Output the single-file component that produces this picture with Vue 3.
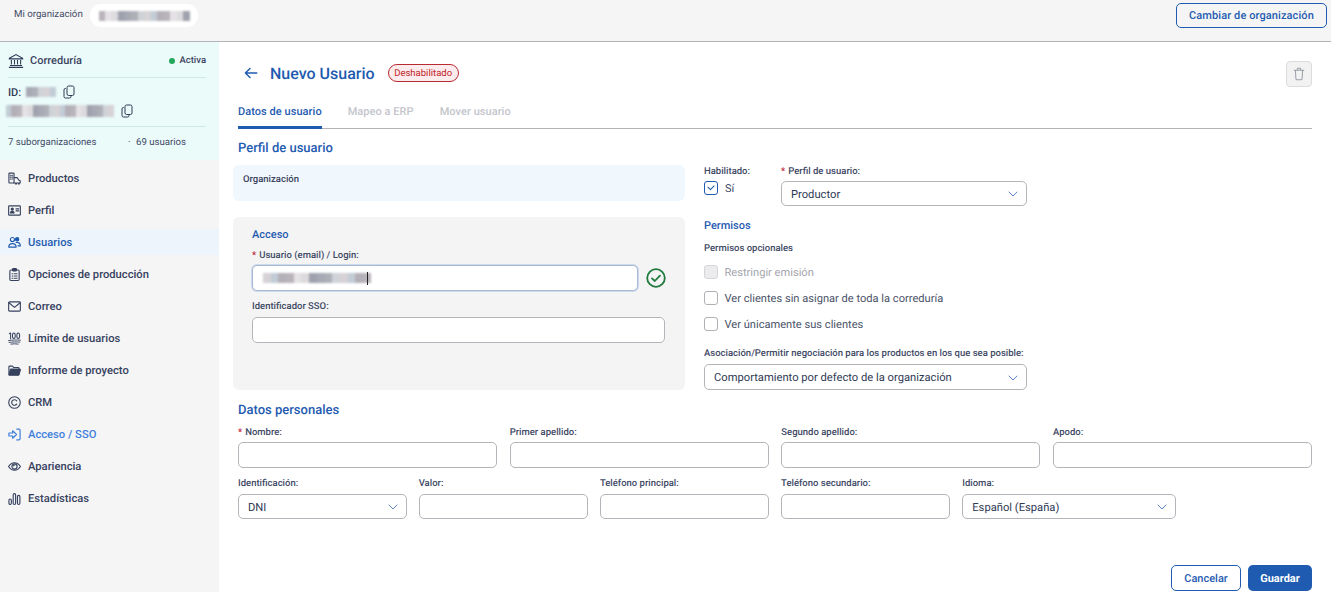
<script setup>
const pal = ['#b9b4bb','#d6d2d6','#a7a9b4','#e4e2e4','#c2ccd6','#aeb0b8','#dcdadc','#b4b0b8','#cfd3d8','#9fa2ae']
const blur = (n, w, seed = 0) =>
  Array.from({ length: n }, (_, i) => ({ width: w + 'px', background: pal[(i * 3 + seed) % pal.length] }))
const orgBlur = blur(14, 6.5)
const idBlur = blur(5, 6, 2)
const mailBlur = blur(20, 5.4, 4)
const loginBlur = blur(14, 7.7, 1)

const nav = [
  { label: 'Productos', icon: 'products' },
  { label: 'Perfil', icon: 'card' },
  { label: 'Usuarios', icon: 'users', active: true },
  { label: 'Opciones de producción', icon: 'clip' },
  { label: 'Correo', icon: 'mail' },
  { label: 'Límite de usuarios', icon: 'hundred' },
  { label: 'Informe de proyecto', icon: 'folder' },
  { label: 'CRM', icon: 'crm' },
  { label: 'Acceso / SSO', icon: 'login', link: true },
  { label: 'Apariencia', icon: 'eye' },
  { label: 'Estadísticas', icon: 'bars' }
]
const row1 = [
  { label: 'Nombre:', req: true },
  { label: 'Primer apellido:' },
  { label: 'Segundo apellido:' },
  { label: 'Apodo:' }
]
const perms = [
  { label: 'Restringir emisión', disabled: true },
  { label: 'Ver clientes sin asignar de toda la correduría' },
  { label: 'Ver únicamente sus clientes' }
]
</script>

<template>
  <div class="page">
    <header class="topbar">
      <span class="org-label">Mi organización</span>
      <span class="org-pill"><span class="blur"><i v-for="(b, i) in orgBlur" :key="i" :style="b"></i></span></span>
      <button class="btn-outline change">Cambiar de organización</button>
    </header>

    <div class="body">
      <aside class="side">
        <section class="card">
          <div class="card-head">
            <svg class="bank" viewBox="0 0 18 18" fill="none" stroke="#2f3a55" stroke-width="1.2">
              <path d="M1.5 6 9 1.8 16.500 6v.6h-15z" />
              <path d="M3.800 8v5M7.300 8v5M10.700 8v5M14.200 8v5M2.200 14h13.600M1 16.200h16" />
            </svg>
            <span class="card-title">Correduría</span>
            <span class="status"><i class="dot"></i>Activa</span>
          </div>
          <div class="id-row">
            <span class="id">ID:</span>
            <span class="blur"><i v-for="(b, i) in idBlur" :key="i" :style="b"></i></span>
            <svg class="copy" viewBox="0 0 12 14" fill="none" stroke="#2f3a55" stroke-width="1">
              <rect x="4" y="1" width="7" height="9.5" rx="1.6" />
              <path d="M3 3.5h-.6A1.4 1.4 0 0 0 1 5v6.6A1.4 1.4 0 0 0 2.4 13h4.2A1.4 1.4 0 0 0 8 11.6V11" />
            </svg>
          </div>
          <div class="mail-row">
            <span class="blur tall"><i v-for="(b, i) in mailBlur" :key="i" :style="b"></i></span>
            <svg class="copy" viewBox="0 0 12 14" fill="none" stroke="#2f3a55" stroke-width="1">
              <rect x="4" y="1" width="7" height="9.5" rx="1.6" />
              <path d="M3 3.5h-.6A1.4 1.4 0 0 0 1 5v6.6A1.4 1.4 0 0 0 2.4 13h4.2A1.4 1.4 0 0 0 8 11.6V11" />
            </svg>
          </div>
          <div class="counts">
            <span class="subs">7 suborganizaciones</span>
            <span class="sep">·</span>
            <span>69 usuarios</span>
          </div>
        </section>

        <nav class="nav">
          <a v-for="item in nav" :key="item.label" class="nav-item" :class="{ active: item.active, link: item.link }">
            <svg class="nav-icon" viewBox="0 0 14 14" fill="none" stroke="currentColor" stroke-width="1.2" stroke-linecap="round" stroke-linejoin="round">
              <template v-if="item.icon === 'products'">
                <rect x="1" y="1.2" width="5.5" height="10.6" rx=".6" />
                <path d="M2.6 3.5h.6M4.4 3.5H5M2.6 5.5h.6M4.4 5.5H5M2.6 7.5h.6M4.4 7.5H5" />
                <path d="M6.5 6h3.4l1.6 2.6 1.6.8v2.4H6.5M8.2 12.8h.9M11.2 12.8h.9" />
              </template>
              <template v-else-if="item.icon === 'card'">
                <rect x=".7" y="2" width="12.6" height="10" rx=".8" />
                <circle cx="4.6" cy="5.6" r="1.1" fill="currentColor" />
                <path d="M2.6 9.6c.2-2.2 3.8-2.2 4 0z" fill="currentColor" />
                <path d="M8.6 5.2h3M8.6 7.4h3" />
              </template>
              <template v-else-if="item.icon === 'users'">
                <circle cx="4.8" cy="3.8" r="2.2" />
                <circle cx="9.8" cy="3.6" r="1.8" fill="currentColor" />
                <path d="M.8 12c.1-5 7.8-5 8 0zM8.8 7c2.6-.6 4.4.9 4.5 3.6h-2.6" />
              </template>
              <template v-else-if="item.icon === 'clip'">
                <rect x="2" y="2.2" width="10" height="11.2" rx="1.2" />
                <rect x="5" y=".6" width="4" height="2.6" rx=".5" fill="currentColor" />
                <path d="M4.4 6.2h1M7 6.2h2.8M4.4 8.6h1M7 8.6h2.8M4.4 11h1M7 11h2.8" />
              </template>
              <template v-else-if="item.icon === 'mail'">
                <rect x=".7" y="2" width="12.6" height="10" rx="1" />
                <path d="M1 3 7 8l6-5" />
              </template>
              <template v-else-if="item.icon === 'hundred'">
                <path d="M1.4 1.8 2.8 1v6.2" stroke-width="1.1" />
                <ellipse cx="6.3" cy="4.1" rx="1.5" ry="3" stroke-width="1.1" />
                <ellipse cx="11" cy="4.1" rx="1.5" ry="3" stroke-width="1.1" />
                <path d="M.6 9.2c4-.7 8.6-.7 12.8-.4M1.2 11.2c3.800-.6 8-.6 11.600-.3M3 13c2.600-.4 5.600-.4 8 0" stroke-width="1" />
              </template>
              <template v-else-if="item.icon === 'folder'">
                <path d="M1 11V3c0-.4.3-.7.7-.7h3L6 3.7h5c.5 0 .8.3.8.8v1" />
                <path d="M1 11.800 2.600 6c.1-.3.3-.5.7-.5h9.400c.4 0 .7.3.6.7l-1.400 5.300c-.1.3-.3.5-.7.5H1.600z" fill="currentColor" />
              </template>
              <template v-else-if="item.icon === 'crm'">
                <circle cx="7" cy="7" r="6.2" />
                <path d="M9.400 5.200A3 3 0 1 0 9.400 8.800" />
              </template>
              <template v-else-if="item.icon === 'login'">
                <path d="M9.400 1.200h2.400c.8 0 1.200.4 1.200 1.200v9.200c0 .8-.4 1.200-1.200 1.200H9.400" stroke-width="1.3" />
                <path d="M1 5.400h4V3l4.200 4-4.200 4V8.600H1z" stroke-width="1.3" />
              </template>
              <template v-else-if="item.icon === 'eye'">
                <path d="M.6 7c3.400-5.400 9.400-5.400 12.800 0-3.400 5.400-9.400 5.400-12.800 0z" />
                <circle cx="7" cy="7" r="2.800" />
                <path d="M5.800 6.400A1.400 1.400 0 0 1 7.400 5.400" />
              </template>
              <template v-else>
                <rect x="1" y="7.600" width="2.600" height="5.800" rx="1.300" />
                <rect x="5.600" y="1.800" width="2.600" height="11.600" rx="1.300" />
                <rect x="10.200" y="3.600" width="2.600" height="9.800" rx="1.300" />
              </template>
            </svg>
            <span>{{ item.label }}</span>
          </a>
        </nav>
      </aside>

      <main class="main">
        <div class="title-row">
          <svg class="back" viewBox="0 0 14 12" fill="none" stroke="#1f5bb0" stroke-width="1.4" stroke-linecap="round" stroke-linejoin="round">
            <path d="M1.4 6h11.4M6 1.4 1.4 6 6 10.6" />
          </svg>
          <h1>Nuevo Usuario</h1>
          <span class="badge">Deshabilitado</span>
          <button class="trash" aria-label="Eliminar">
            <svg viewBox="0 0 14 16" fill="none" stroke="#9a9ea8" stroke-width="1.2" stroke-linecap="round" stroke-linejoin="round">
              <path d="M1.4 3.6h11.2M5 3.4V2.2c0-.5.3-.8.8-.8h2.4c.5 0 .8.3.8.8v1.2M2.8 3.8l.6 9.8c0 .6.4 1 1 1h5.2c.6 0 1-.4 1-1l.6-9.8" />
            </svg>
          </button>
        </div>

        <div class="tabs">
          <span class="tab current">Datos de usuario</span>
          <span class="tab">Mapeo a ERP</span>
          <span class="tab">Mover usuario</span>
        </div>

        <h2 class="section">Perfil de usuario</h2>

        <div class="columns">
          <div class="left">
            <div class="org-box">Organización</div>
            <div class="access">
              <h3>Acceso</h3>
              <label class="lbl"><span class="req">*</span>Usuario (email) / Login:</label>
              <div class="login-row">
                <div class="field focused">
                  <span class="blur"><i v-for="(b, i) in loginBlur" :key="i" :style="b"></i></span>
                  <i class="caret"></i>
                </div>
                <svg class="ok" viewBox="0 0 20 20" fill="none" stroke="#1f7a3d" stroke-width="1.8" stroke-linecap="round" stroke-linejoin="round">
                  <circle cx="10" cy="10" r="8.8" />
                  <path d="M6 10.4 8.8 13 14 7.6" />
                </svg>
              </div>
              <label class="lbl sso">Identificador SSO:</label>
              <input class="field" type="text" />
            </div>
          </div>

          <div class="right">
            <div class="top-fields">
              <div class="enabled">
                <label class="lbl">Habilitado:</label>
                <div class="check-line">
                  <span class="box checked">
                    <svg viewBox="0 0 14 14" fill="none" stroke="#1f5bb0" stroke-width="1.2" stroke-linecap="round" stroke-linejoin="round"><path d="M3.4 6 6.4 9l4.2-4.4" /></svg>
                  </span>
                  <span class="si">Sí</span>
                </div>
              </div>
              <div class="profile">
                <label class="lbl"><span class="req">*</span>Perfil de usuario:</label>
                <div class="select">
                  <span>Productor</span>
                  <svg viewBox="0 0 10 6" fill="none" stroke="#4a78bd" stroke-width=".9" stroke-linecap="round" stroke-linejoin="round"><path d="M1 1l4 4 4-4" /></svg>
                </div>
              </div>
            </div>
            <h3 class="perm-title">Permisos</h3>
            <p class="lbl perm-sub">Permisos opcionales</p>
            <div v-for="p in perms" :key="p.label" class="perm" :class="{ disabled: p.disabled }">
              <span class="box"></span>
              <span>{{ p.label }}</span>
            </div>
            <label class="lbl assoc">Asociación/Permitir negociación para los productos en los que sea posible:</label>
            <div class="select">
              <span>Comportamiento por defecto de la organización</span>
              <svg viewBox="0 0 10 6" fill="none" stroke="#4a78bd" stroke-width=".9" stroke-linecap="round" stroke-linejoin="round"><path d="M1 1l4 4 4-4" /></svg>
            </div>
          </div>
        </div>

        <h2 class="section personal">Datos personales</h2>
        <div class="row-a">
          <div v-for="f in row1" :key="f.label">
            <label class="lbl"><span v-if="f.req" class="req">*</span>{{ f.label }}</label>
            <input class="field" type="text" />
          </div>
        </div>
        <div class="row-b">
          <div>
            <label class="lbl">Identificación:</label>
            <div class="select">
              <span>DNI</span>
              <svg viewBox="0 0 10 6" fill="none" stroke="#4a78bd" stroke-width=".9" stroke-linecap="round" stroke-linejoin="round"><path d="M1 1l4 4 4-4" /></svg>
            </div>
          </div>
          <div>
            <label class="lbl">Valor:</label>
            <input class="field" type="text" />
          </div>
          <div>
            <label class="lbl">Teléfono principal:</label>
            <input class="field" type="text" />
          </div>
          <div>
            <label class="lbl">Teléfono secundario:</label>
            <input class="field" type="text" />
          </div>
          <div>
            <label class="lbl">Idioma:</label>
            <div class="select">
              <span>Español (España)</span>
              <svg viewBox="0 0 10 6" fill="none" stroke="#4a78bd" stroke-width=".9" stroke-linecap="round" stroke-linejoin="round"><path d="M1 1l4 4 4-4" /></svg>
            </div>
          </div>
        </div>

        <div class="actions">
          <button class="btn-outline cancel">Cancelar</button>
          <button class="save">Guardar</button>
        </div>
      </main>
    </div>
  </div>
</template>

<style>
html, body { margin: 0; background: #fff; overflow: hidden; }
</style>

<style scoped>
* { box-sizing: border-box; }
.page {
  width: 1331px; height: 592px; overflow: hidden;
  font-family: Roboto, "Noto Sans", sans-serif; color: #2f3a55;
  display: flex; flex-direction: column;
  text-rendering: geometricPrecision;
}
.topbar {
  height: 42px; flex: none; background: #f5f5f5; border-bottom: 1px solid #b3b3b8;
  display: flex; align-items: flex-start; padding: 4px 4px 0 14px;
}
.org-label { width: 76px; font-size: 9.7px; line-height: 22px; color: #3f4a66; white-space: nowrap; }
.org-pill {
  width: 108px; height: 23px; background: #fff; border-radius: 11px;
  display: flex; align-items: center; justify-content: center;
}
.blur { display: inline-flex; filter: blur(1.1px); height: 10px; }
.blur.tall { height: 12px; }
.blur i { display: block; height: 100%; }
.btn-outline {
  font-family: inherit; background: #fff; color: #1f5bb0; border: 1px solid #1f5bb0; border-radius: 5px;
  font-weight: 500; cursor: pointer; padding: 0; text-rendering: geometricPrecision;
}
.change { margin-left: auto; width: 151px; height: 25px; font-size: 11px; letter-spacing: .1px; background: #f5f5f5; margin-top: -1px; }
.body { flex: 1; display: flex; min-height: 0; }
.side { width: 219px; flex: none; background: #f5f5f5; }
.card { height: 118px; background: #ebfbfa; padding: 0 13px 0 8px; }
.card-head {
  height: 36px; padding-top: 2px; display: flex; align-items: center; border-bottom: 1px solid #cfe8e6;
}
.bank { width: 16px; height: 16px; margin-right: 6px; }
.card-title { font-size: 11px; font-weight: 500; color: #3c4560; }
.status { margin-left: auto; font-size: 9.5px; font-weight: 500; display: flex; align-items: center; color: #3c4560; }
.dot { width: 6px; height: 6px; border-radius: 50%; background: #22a85a; margin-right: 4px; }
.id-row { height: 22px; margin-top: 3px; display: flex; align-items: center; }
.id { font-size: 11px; font-weight: 500; margin-right: 5px; }
.copy { width: 12px; height: 14px; margin-left: 7px; }
.mail-row { height: 16px; display: flex; align-items: center; margin-left: -2px; }
.counts {
  margin-top: 7px; border-top: 1px solid #cfe8e6; height: 32px;
  display: flex; align-items: center; font-size: 9.6px; color: #3f4a66;
}
.subs { width: 120px; }
.sep { width: 8px; }
.nav { display: flex; flex-direction: column; padding-top: 2px; }
.nav-item {
  height: 32px; display: flex; align-items: center; padding-left: 8px;
  font-size: 11.2px; font-weight: 500; color: #36415e; position: relative;
}
.nav-item.active { color: #1f5bb0; }
.nav-item.active::before {
  content: ""; position: absolute; left: 0; right: 0; top: 3px; bottom: 3px; background: #edf4fc;
}
.nav-item.link { color: #3f80dd; }
.nav-item > * { position: relative; }
.nav-icon { width: 13px; height: 13px; margin-right: 7px; flex: none; }
.main { flex: 1; min-width: 0; padding: 0 19px; }
.title-row { height: 62px; display: flex; align-items: center; padding-left: 6px; position: relative; }
.back { width: 14px; height: 12px; margin-right: 12px; }
h1 { margin: 0; font-size: 16px; font-weight: 500; color: #1f5bb0; }
.badge {
  margin-left: 13px; height: 18px; width: 71px; text-align: center; border: 1px solid #b72a30; border-radius: 9px;
  background: #fdeced; color: #c2242b; font-size: 9.5px; line-height: 17px;
}
.trash {
  margin-left: auto; margin-top: 2px; width: 26px; height: 26px; padding: 0; background: #f2f2f2;
  border: 1px solid #dcdcdf; border-radius: 4px; display: flex; align-items: center; justify-content: center;
}
.trash svg { width: 12px; height: 14px; }
.tabs { height: 25px; display: flex; gap: 26px; border-bottom: 1px solid #b3b3b8; }
.tab { font-size: 11px; font-weight: 500; line-height: 16px; color: #c3c5cb; letter-spacing: .05px; }
.tab.current { color: #1f5bb0; border-bottom: 3px solid #1f5bb0; height: 25px; }
.section { margin: 0; font-size: 13px; font-weight: 500; color: #1f5bb0; line-height: 16px; }
.tabs + .section { margin-top: 12px; }
.columns { display: flex; margin-top: 8px; }
.left { width: 452px; margin-left: -5px; flex: none; }
.org-box {
  height: 36px; background: #f0f7fd; border-radius: 6px; padding: 9px 10px;
  font-size: 9.5px; font-weight: 500; line-height: 12px; color: #3c4560;
}
.access {
  margin-top: 16px; height: 173px; background: #f4f4f4; border-radius: 6px; padding: 11px 20px 11px 19px;
}
h3 { margin: 0; font-size: 11px; font-weight: 500; color: #1f5bb0; line-height: 14px; }
.lbl { display: block; font-size: 9.5px; line-height: 12px; color: #3f4a66; font-weight: 500; white-space: nowrap; }
.access .lbl { margin-top: 8px; height: 12px; }
.req { color: #c0283a; margin-right: 3px; }
.login-row { display: flex; align-items: center; gap: 8px; margin-top: 3px; margin-right: -1px; }
.field {
  display: block; width: 100%; height: 26px; border: 1px solid #b4b4ba; border-radius: 5px;
  background: #fff; padding: 0 10px; outline: none; font: inherit;
}
.focused {
  width: 386px; flex: none; display: flex; align-items: center; position: relative;
  border-color: #a9b8d4; box-shadow: 0 0 0 1px #cdd9ec;
}
.caret { position: absolute; left: 114px; top: 6px; width: 1px; height: 13px; background: #222; }
.ok { width: 20px; height: 20px; }
.access .sso { margin-top: 10px; margin-bottom: 4px; }
.right { margin-left: 19px; width: 323px; }
.top-fields { display: flex; gap: 30px; padding-top: 1px; }
.enabled { width: 47px; }
.enabled .lbl, .profile .lbl { margin-bottom: 3px; }
.check-line { display: flex; align-items: center; gap: 7px; font-size: 11px; margin-top: 3px; }
.si { font-size: 11px; color: #3f4a66; }
.box {
  width: 14px; height: 14px; flex: none; border: 1px solid #b0b0b6; border-radius: 3px; background: #fff; display: block;
}
.box.checked { border-color: #1f5bb0; background: #fff; }
.box svg { display: block; width: 12px; height: 12px; }
.profile { width: 246px; }
.select {
  height: 26px; width: 100%; border: 1px solid #b4b4ba; border-radius: 5px; background: #fff;
  display: flex; align-items: center; justify-content: space-between; padding: 1px 8px 0 9px;
  font-size: 11.2px; color: #2f3a55;
}
.select svg { width: 10px; height: 6px; }
.profile .select { height: 25px; }
.perm-title { margin-top: 13px; font-size: 11px; }
.perm-sub { margin: 10px 0 10px; }
.perm { display: flex; align-items: center; gap: 6.5px; height: 14px; font-size: 11.1px; color: #4a5268; margin-bottom: 12px; }
.perm.disabled { color: #a3a5ac; }
.perm.disabled .box { background: #ececee; border-color: #d6d6da; }
.assoc { margin-top: 17px; margin-bottom: 4px; }
.personal { margin-top: 13px; }
.row-a { display: grid; grid-template-columns: repeat(4, 259px); gap: 12.67px; margin-top: 8px; }
.row-a .lbl { margin-bottom: 3px; }
.row-b .lbl { margin-bottom: 4px; }
.row-b { display: grid; grid-template-columns: 168.5px 169px 169px 169px 214px; gap: 12.2px; margin-top: 10px; }
.row-b .field, .row-b .select { height: 25px; }
.actions { display: flex; justify-content: flex-end; gap: 7px; margin-top: 46px; }
.cancel { width: 70px; height: 26px; font-size: 11px; }
.save {
  width: 64px; height: 26px; border: 0; border-radius: 5px; background: #1f5bb0; color: #fff;
  font-family: inherit; font-size: 11px; font-weight: 700; text-rendering: geometricPrecision;
}
</style>
